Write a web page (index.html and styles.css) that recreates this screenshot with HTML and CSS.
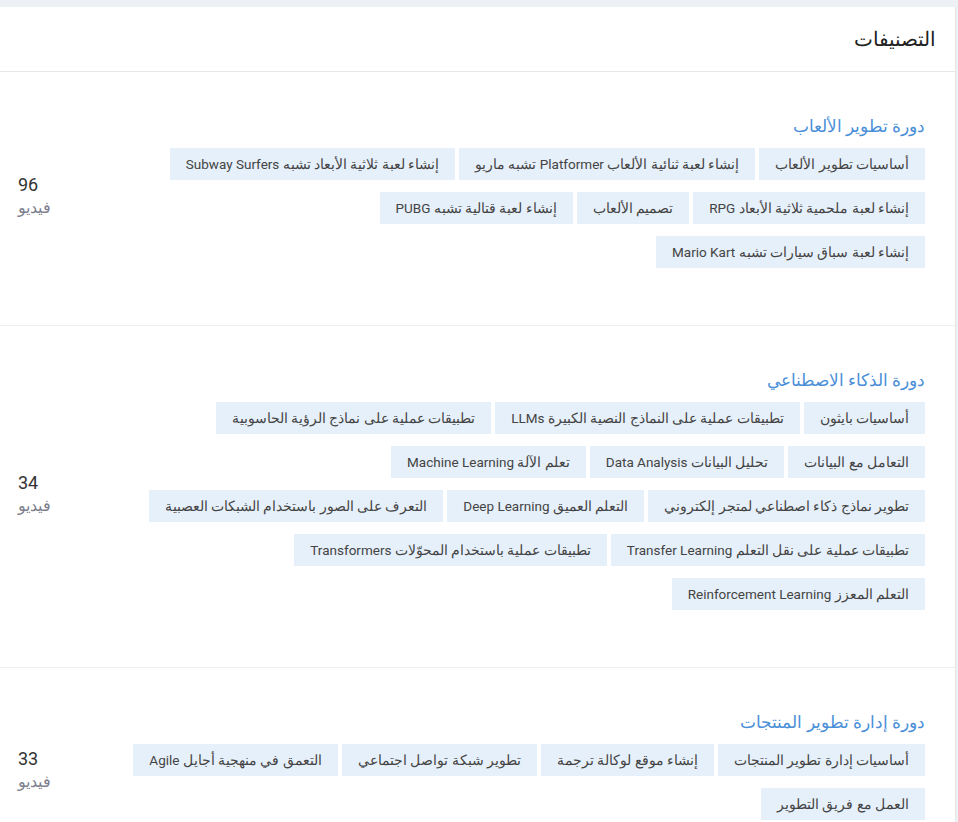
FILE: index.html
```html
<!DOCTYPE html>
<html lang="ar" dir="rtl">
<head>
<meta charset="utf-8">
<title>التصنيفات</title>
<link rel="stylesheet" href="styles.css">
</head>
<body>
<div class="card">
  <div class="card-header">التصنيفات</div>

  <div class="section">
    <div class="section-body">
      <h3 class="section-title">دورة تطوير الألعاب</h3>
      <div class="tags">
        <span class="tag">أساسيات تطوير الألعاب</span>
        <span class="tag">إنشاء لعبة ثنائية الألعاب <span class="lat">Platformer</span> تشبه ماريو</span>
        <span class="tag">إنشاء لعبة ثلاثية الأبعاد تشبه <span class="lat">Subway Surfers</span></span>
        <span class="tag">إنشاء لعبة ملحمية ثلاثية الأبعاد <span class="lat">RPG</span></span>
        <span class="tag">تصميم الألعاب</span>
        <span class="tag">إنشاء لعبة قتالية تشبه <span class="lat">PUBG</span></span>
        <span class="tag">إنشاء لعبة سباق سيارات تشبه <span class="lat">Mario Kart</span></span>
      </div>
    </div>
    <div class="count">
      <div class="count-num">96</div>
      <div class="count-label">فيديو</div>
    </div>
  </div>

  <div class="section">
    <div class="section-body">
      <h3 class="section-title">دورة الذكاء الاصطناعي</h3>
      <div class="tags">
        <span class="tag">أساسيات بايثون</span>
        <span class="tag">تطبيقات عملية على النماذج النصية الكبيرة <span class="lat">LLMs</span></span>
        <span class="tag">تطبيقات عملية على نماذج الرؤية الحاسوبية</span>
        <span class="tag">التعامل مع البيانات</span>
        <span class="tag">تحليل البيانات <span class="lat">Data Analysis</span></span>
        <span class="tag">تعلم الآلة <span class="lat">Machine Learning</span></span>
        <span class="tag">تطوير نماذج ذكاء اصطناعي لمتجر إلكتروني</span>
        <span class="tag">التعلم العميق <span class="lat">Deep Learning</span></span>
        <span class="tag">التعرف على الصور باستخدام الشبكات العصبية</span>
        <span class="tag">تطبيقات عملية على نقل التعلم <span class="lat">Transfer Learning</span></span>
        <span class="tag">تطبيقات عملية باستخدام المحوّلات <span class="lat">Transformers</span></span>
        <span class="tag">التعلم المعزز <span class="lat">Reinforcement Learning</span></span>
      </div>
    </div>
    <div class="count">
      <div class="count-num">34</div>
      <div class="count-label">فيديو</div>
    </div>
  </div>

  <div class="section">
    <div class="section-body">
      <h3 class="section-title">دورة إدارة تطوير المنتجات</h3>
      <div class="tags">
        <span class="tag">أساسيات إدارة تطوير المنتجات</span>
        <span class="tag">إنشاء موقع لوكالة ترجمة</span>
        <span class="tag">تطوير شبكة تواصل اجتماعي</span>
        <span class="tag">التعمق في منهجية أجايل <span class="lat">Agile</span></span>
        <span class="tag">العمل مع فريق التطوير</span>
      </div>
    </div>
    <div class="count">
      <div class="count-num">33</div>
      <div class="count-label">فيديو</div>
    </div>
  </div>
</div>
</body>
</html>
```

FILE: styles.css
```css
html, body {
  margin: 0;
  padding: 0;
}
body {
  background: #edf1f6;
  font-family: Roboto, sans-serif;
  color: #333;
  direction: rtl;
}
.card {
  margin: 7px 2px 0 0;
  background: #fff;
  border-right: 1px solid #e6e6e6;
}
.card-header {
  height: 64px;
  line-height: 64px;
  padding-right: 19px;
  font-size: 20px;
  color: #222;
  border-bottom: 1px solid #e8e8e8;
}
.section {
  display: flex;
  align-items: center;
  border-bottom: 1px solid #eeeeee;
}
.section-body {
  flex: 1;
  padding: 42px 30px 57px 0;
}
.section-title {
  margin: 0 0 10px;
  font-size: 17px;
  line-height: 24px;
  height: 24px;
  font-weight: normal;
  color: #4a8fd8;
}
.tags {
  display: flex;
  flex-wrap: wrap;
  gap: 12px 4px;
}
.tag {
  background: #e6f0fa;
  color: #444;
  font-size: 13.5px;
  line-height: 32px;
  height: 32px;
  padding: 0 16px;
  white-space: nowrap;
}
.lat {
  font-size: 13.5px;
}
.count {
  box-sizing: border-box;
  width: 124px;
  flex: none;
  padding-left: 18px;
  text-align: left;
  margin-top: -5px;
}
.count-num {
  font-size: 18px;
  line-height: 24px;
  color: #333;
}
.count-label {
  font-size: 16px;
  line-height: 22px;
  color: #7d7f8e;
}
```
